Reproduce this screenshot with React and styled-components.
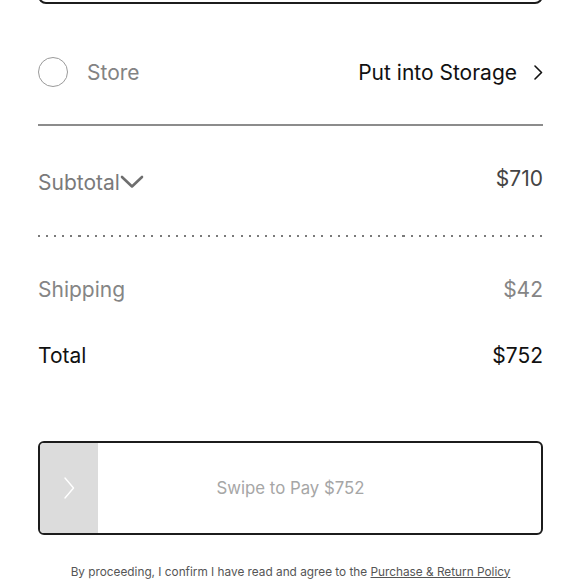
import React from 'react';
import styled, { createGlobalStyle } from 'styled-components';

const GlobalStyle = createGlobalStyle`
  html, body {
    margin: 0;
    padding: 0;
    background: #fff;
    overflow: hidden;
  }
  body {
    font-family: 'Inter', 'Liberation Sans', sans-serif;
    -webkit-font-smoothing: antialiased;
  }
`;

const Page = styled.div`
  width: 505px;
  margin: 0 auto 0 38px;
  display: flex;
  flex-direction: column;
`;

const TopCard = styled.div`
  height: 60px;
  margin-top: -60px;
  border: 2px solid #1c1c1c;
  border-radius: 8px;
`;

const OptionRow = styled.div`
  height: 64px;
  margin-top: 36px;
  display: flex;
  align-items: center;
`;

const Radio = styled.span`
  width: 28px;
  height: 28px;
  border: 1.5px solid #9a9a9a;
  border-radius: 50%;
  flex-shrink: 0;
`;

const OptionLabel = styled.span`
  margin-left: 19px;
  font-size: 21px;
  color: #838383;
  flex: 1;
`;

const OptionAction = styled.span`
  display: flex;
  align-items: center;
  gap: 17px;
  font-size: 21px;
  color: #111;
`;

const Divider = styled.div`
  margin-top: 20px;
  height: 2px;
  background: #8c8c8c;
`;

const Row = styled.div`
  display: flex;
  justify-content: space-between;
  align-items: center;
  margin-top: ${({ $top }) => $top}px;
  height: 30px;
`;

const Label = styled.span`
  display: flex;
  align-items: center;
  font-size: 21px;
  color: ${({ $color }) => $color};
`;

const Amount = styled.span`
  font-size: 21px;
  color: ${({ $color }) => $color};
  transform: translateY(${({ $shift }) => $shift || 0}px);
`;

const Dotted = styled.div`
  margin-top: 38px;
  height: 1.5px;
  background-image: repeating-linear-gradient(
    to right,
    #7a7a7a 0 2px,
    transparent 2px 8.1px
  );
`;

const SwipeBox = styled.div`
  margin-top: 70px;
  height: 90px;
  border: 2px solid #1c1c1c;
  border-radius: 6px;
  display: flex;
  align-items: stretch;
  overflow: hidden;
`;

const Handle = styled.div`
  width: 58px;
  background: #dcdcdc;
  display: flex;
  align-items: center;
  justify-content: center;
  flex-shrink: 0;
`;

const SwipeText = styled.div`
  flex: 1;
  display: flex;
  align-items: center;
  justify-content: center;
  padding-right: 58px;
  font-size: 16.8px;
  color: #a6a6a6;
`;

const Footer = styled.p`
  margin: 30px 0 0;
  text-align: center;
  font-size: 11.8px;
  color: #555;
  white-space: nowrap;
`;

const PolicyLink = styled.a`
  color: #555;
  text-decoration: underline;
`;

const ChevronRight = ({ color = '#111', w = 9, h = 15, sw = 1.6 }) => (
  <svg width={w} height={h} viewBox={`0 0 ${w} ${h}`} fill="none">
    <polyline
      points={`1,1 ${w - 1.5},${h / 2} 1,${h - 1}`}
      stroke={color}
      strokeWidth={sw}
      strokeLinecap="round"
      strokeLinejoin="round"
    />
  </svg>
);

const ChevronDown = () => (
  <svg width="24" height="14" viewBox="0 0 24 14" fill="none">
    <polyline
      points="2,2 12,11.5 22,2"
      stroke="#6e6e6e"
      strokeWidth="2.6"
      strokeLinecap="round"
      strokeLinejoin="round"
    />
  </svg>
);

const App = () => (
  <>
    <GlobalStyle />
    <Page>
      <TopCard />
      <OptionRow>
        <Radio />
        <OptionLabel>Store</OptionLabel>
        <OptionAction>
          Put into Storage
          <ChevronRight />
        </OptionAction>
      </OptionRow>
      <Divider />
      <Row $top={41}>
        <Label $color="#7a7a7a">
          Subtotal
          <ChevronDown />
        </Label>
        <Amount $color="#444" $shift={-4}>$710</Amount>
      </Row>
      <Dotted />
      <Row $top={38}>
        <Label $color="#858585">Shipping</Label>
        <Amount $color="#858585">$42</Amount>
      </Row>
      <Row $top={36}>
        <Label $color="#111">Total</Label>
        <Amount $color="#111">$752</Amount>
      </Row>
      <SwipeBox>
        <Handle>
          <ChevronRight color="#fff" w={11} h={22} sw={1.4} />
        </Handle>
        <SwipeText>Swipe to Pay $752</SwipeText>
      </SwipeBox>
      <Footer>
        By proceeding, I confirm I have read and agree to the{' '}
        <PolicyLink href="#">Purchase &amp; Return Policy</PolicyLink>
      </Footer>
    </Page>
  </>
);

export default App;
